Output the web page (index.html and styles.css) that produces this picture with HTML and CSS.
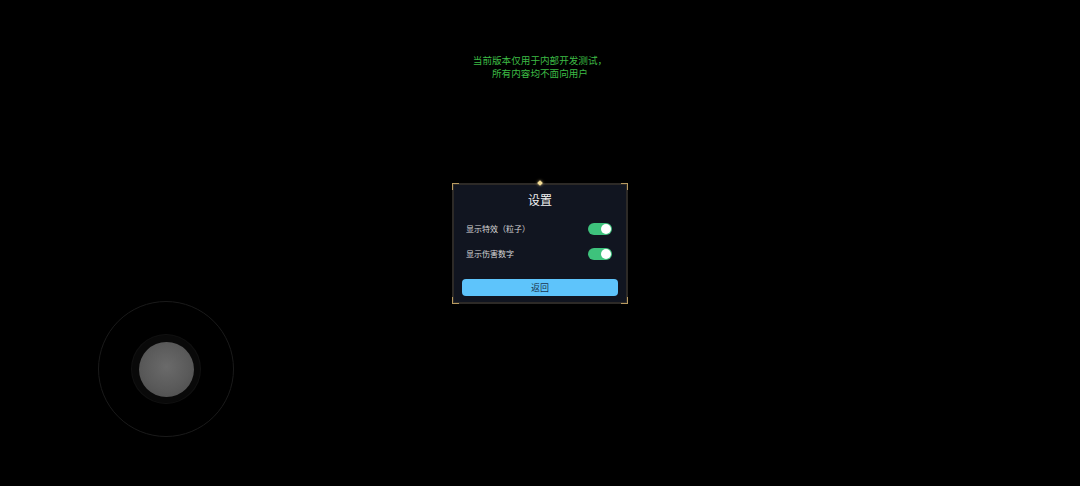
FILE: index.html
```html
<!DOCTYPE html>
<html lang="zh-CN">
<head>
  <meta charset="UTF-8">
  <title>设置</title>
  <link rel="stylesheet" href="styles.css">
</head>
<body>
  <div class="stage">
    <div class="notice">
      <p>当前版本仅用于内部开发测试，</p>
      <p>所有内容均不面向用户</p>
    </div>

    <div class="panel">
      <span class="corner tl"></span>
      <span class="corner tr"></span>
      <span class="corner bl"></span>
      <span class="corner br"></span>
      <span class="gem"></span>

      <h2 class="panel-title">设置</h2>
      <div class="row">
        <span>显示特效（粒子）</span>
        <span class="toggle on"></span>
      </div>
      <div class="row">
        <span>显示伤害数字</span>
        <span class="toggle on"></span>
      </div>
      <button type="button" class="btn-back">返回</button>
    </div>

    <!-- 虚拟摇杆 -->
    <div class="joystick">
      <div class="joystick-base">
        <div class="joystick-knob"></div>
      </div>
    </div>
  </div>
</body>
</html>
```

FILE: styles.css
```css
/* 页面基础 */
html, body {
  margin: 0;
  padding: 0;
  background: #000;
}
body {
  font-family: "Noto Sans CJK SC", "Noto Sans", sans-serif;
}
.stage {
  position: relative;
  width: 1080px;
  height: 486px;
  display: flex;
  flex-direction: column;
  align-items: center;
  overflow: hidden;
}

/* 顶部提示 */
.notice {
  margin-top: 54px;
  text-align: center;
  color: #3dbb45;
  font-size: 9.6px;
  line-height: 13px;
}
.notice p {
  margin: 0;
}

/* 设置面板 */
.panel {
  position: relative;
  margin-top: 103px;
  width: 176px;
  box-sizing: border-box;
  padding: 7px 8px 6px;
  background: #111520;
  border: 2px solid #2d2a27;
  color: #e6e6e6;
}
.corner {
  position: absolute;
  width: 6px;
  height: 6px;
  border-color: #b89a60;
  border-style: solid;
  border-width: 0;
}
.corner.tl { top: -2px; left: -2px; border-top-width: 1px; border-left-width: 1px; }
.corner.tr { top: -2px; right: -2px; border-top-width: 1px; border-right-width: 1px; }
.corner.bl { bottom: -2px; left: -2px; border-bottom-width: 1px; border-left-width: 1px; }
.corner.br { bottom: -2px; right: -2px; border-bottom-width: 1px; border-right-width: 1px; }
.gem {
  position: absolute;
  top: -4px;
  left: 50%;
  width: 4px;
  height: 4px;
  margin-left: -2px;
  background: #f3dc96;
  transform: rotate(45deg);
  box-shadow: 0 0 3px rgba(243, 220, 150, 0.8);
}
.panel-title {
  margin: 0 0 8px;
  font-size: 12px;
  line-height: 16px;
  font-weight: normal;
  text-align: center;
  color: #f2f2f2;
}
.row {
  height: 25px;
  display: flex;
  align-items: center;
  justify-content: space-between;
  padding: 0 6px 0 4px;
  font-size: 8px;
  color: #d8d8d8;
}

/* 开关 */
.toggle {
  position: relative;
  width: 24px;
  height: 12px;
  border-radius: 6px;
  background: #555;
}
.toggle.on {
  background: #3ec27c;
}
.toggle::after {
  content: "";
  position: absolute;
  top: 1px;
  left: 1px;
  width: 10px;
  height: 10px;
  border-radius: 50%;
  background: #fff;
}
.toggle.on::after {
  left: 13px;
}

.btn-back {
  display: block;
  width: 100%;
  height: 17px;
  margin-top: 13px;
  padding: 0;
  border: none;
  border-radius: 4px;
  background: #5ec4fb;
  color: #1b3450;
  font-family: inherit;
  font-size: 9px;
  line-height: 17px;
  cursor: pointer;
}

/* 摇杆 */
.joystick {
  position: absolute;
  left: 98px;
  top: 301px;
  width: 136px;
  height: 136px;
  box-sizing: border-box;
  border: 1px solid #1a1a1a;
  border-radius: 50%;
  display: flex;
  align-items: center;
  justify-content: center;
}
.joystick-base {
  width: 68px;
  height: 68px;
  border-radius: 50%;
  background: #090909;
  box-shadow: 0 0 0 1px #111;
  display: flex;
  align-items: center;
  justify-content: center;
}
.joystick-knob {
  width: 55px;
  height: 55px;
  border-radius: 50%;
  background: radial-gradient(circle at 50% 45%, #6a6a6a 0%, #5a5a5a 55%, #4a4a4a 100%);
}
```
